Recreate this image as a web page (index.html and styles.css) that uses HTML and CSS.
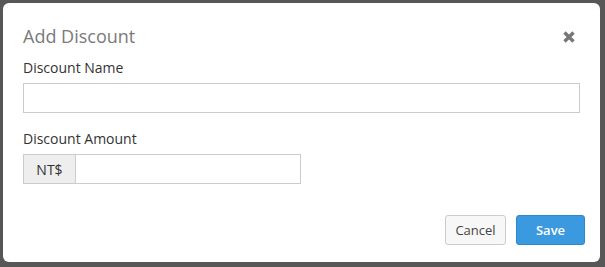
FILE: index.html
```html
<!DOCTYPE html>
<html>
<head>
<meta charset="utf-8">
<link rel="stylesheet" href="styles.css">
</head>
<body>
<div class="backdrop">
  <div class="modal">
    <div class="modal-header">
      <h4 class="modal-title">Add Discount</h4>
      <svg class="close" width="12" height="12" viewBox="0 0 12 12"><path d="M1.5 1.5 L10.5 10.5 M10.5 1.5 L1.5 10.5" stroke="#777" stroke-width="3.4" stroke-linecap="butt"/></svg>
    </div>
    <div class="modal-body">
      <label class="label">Discount Name</label>
      <div class="input full"></div>
      <label class="label second">Discount Amount</label>
      <div class="input-group">
        <span class="addon">NT$</span>
        <div class="input grow"></div>
      </div>
    </div>
    <div class="modal-footer">
      <button class="btn btn-default">Cancel</button>
      <button class="btn btn-primary">Save</button>
    </div>
  </div>
</div>
</body>
</html>
```
FILE: styles.css
```css
html, body { margin: 0; padding: 0; }
body {
  width: 605px; height: 267px;
  background: #575757;
  font-family: "Open Sans", "DejaVu Sans", sans-serif;
  overflow: hidden;
}
.backdrop { padding: 3px 5px 5px 3px; box-sizing: border-box; height: 267px; }
.modal {
  background: #fff;
  border-radius: 6px;
  height: 259px;
  box-sizing: border-box;
  padding: 0 20px 0 20px;
  display: flex;
  flex-direction: column;
}
.modal-header {
  display: flex;
  justify-content: space-between;
  align-items: center;
  height: 55px;
  padding-top: 11px;
  box-sizing: border-box;
}
.modal-title {
  margin: 0;
  font-weight: 400;
  font-size: 18px;
  color: #7a7a7a;
}
.close {
  margin-right: 5px;
  margin-top: 1px;
}
.modal-body { display: flex; flex-direction: column; align-items: flex-start; }
.label { font-size: 14px; color: #333; line-height: 20px; margin-bottom: 5px; }
.label.second { margin-top: 16px; margin-bottom: 5px; }
.input {
  height: 30px;
  border: 1px solid #cccccc;
  box-sizing: border-box;
  background: #fff;
}
.input.full { width: 557px; }
.input-group { display: flex; width: 278px; }
.addon {
  width: 52px;
  height: 30px;
  box-sizing: border-box;
  border: 1px solid #cccccc;
  border-right: 0;
  background: #eeeeee;
  font-size: 14px;
  color: #333;
  display: flex;
  align-items: center;
  justify-content: center;
}
.grow { flex: 1; }
.modal-footer {
  display: flex;
  justify-content: flex-end;
  gap: 10px;
  margin-top: 31px;
  margin-right: -5px;
}
.btn {
  height: 30px;
  font-family: "Open Sans", "DejaVu Sans", sans-serif;
  font-size: 13px;
  border-radius: 3px;
  padding: 0;
  box-sizing: border-box;
}
.btn-default {
  width: 61px;
  background: #f7f7f7;
  border: 1px solid #cccccc;
  color: #444;
}
.btn-primary {
  width: 69px;
  background: #3b99e0;
  border: 1px solid #2f87cc;
  color: #fff;
  font-weight: 600;
}
```
